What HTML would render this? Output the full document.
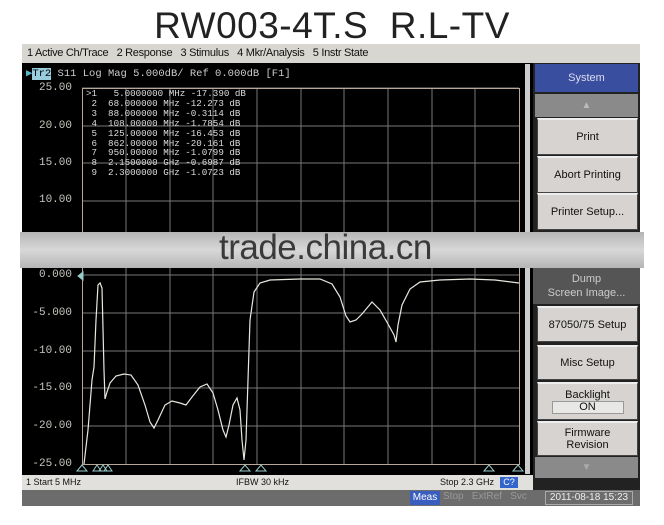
<!DOCTYPE html>
<html><head><style>
*{margin:0;padding:0;box-sizing:border-box}
body{width:664px;height:525px;background:#fff;position:relative;overflow:hidden;font-family:"Liberation Sans",sans-serif}
.a{position:absolute}
#title{left:0;width:664px;top:5px;text-align:center;font-size:37px;color:#222;letter-spacing:0.5px;white-space:pre}
#menu{left:22px;top:44px;width:618px;height:19px;background:#d8d6d0;font-size:11px;line-height:19px;padding-left:5px;color:#111;white-space:pre;letter-spacing:-0.3px}
#scr{left:22px;top:63px;width:511px;height:412px;background:#000}
.yl{position:absolute;left:22px;width:50px;text-align:right;font-family:"Liberation Mono",monospace;font-size:11px;color:#c8c8c0}
.mk{font-family:"Liberation Mono",monospace;font-size:9.2px;color:#ddd;white-space:pre;line-height:9.9px}
.btn{position:absolute;left:537px;width:101px;background:#d6d3d0;border:1px solid #444;border-top:2px solid #eee;font-size:11px;text-align:center;color:#111;display:flex;flex-direction:column;justify-content:center;align-items:center}
</style></head><body>
<div id="title" class="a">RW003-4T.S  R.L-TV</div>
<div id="menu" class="a">1 Active Ch/Trace   2 Response   3 Stimulus   4 Mkr/Analysis   5 Instr State</div>
<div id="scr" class="a"></div>
<div class="a" style="left:26px;top:67px;font-family:'Liberation Mono',monospace;font-size:10.5px;color:#ccc;white-space:pre"><span style="color:#5bc;">▶</span><span style="background:#9cd;color:#000">Tr2</span> S11 Log Mag 5.000dB/ Ref 0.000dB [F1]</div>
<div class="yl" style="top:82px">25.00</div>
<div class="yl" style="top:120px">20.00</div>
<div class="yl" style="top:157px">15.00</div>
<div class="yl" style="top:194px">10.00</div>
<div class="yl" style="top:269px">0.000</div>
<div class="yl" style="top:307px">-5.000</div>
<div class="yl" style="top:345px">-10.00</div>
<div class="yl" style="top:382px">-15.00</div>
<div class="yl" style="top:420px">-20.00</div>
<div class="yl" style="top:458px">-25.00</div>
<svg class="a" style="left:0;top:0" width="664" height="525">
<g stroke="#777" stroke-width="1">
<line x1="82" y1="88" x2="519" y2="88"/><line x1="82" y1="126" x2="519" y2="126"/><line x1="82" y1="163" x2="519" y2="163"/><line x1="82" y1="201" x2="519" y2="201"/><line x1="82" y1="238" x2="519" y2="238"/><line x1="82" y1="275" x2="519" y2="275"/><line x1="82" y1="313" x2="519" y2="313"/><line x1="82" y1="351" x2="519" y2="351"/><line x1="82" y1="388" x2="519" y2="388"/><line x1="82" y1="426" x2="519" y2="426"/>
<line x1="126" y1="88" x2="126" y2="464"/><line x1="170" y1="88" x2="170" y2="464"/><line x1="213" y1="88" x2="213" y2="464"/><line x1="257" y1="88" x2="257" y2="464"/><line x1="301" y1="88" x2="301" y2="464"/><line x1="344" y1="88" x2="344" y2="464"/><line x1="388" y1="88" x2="388" y2="464"/><line x1="432" y1="88" x2="432" y2="464"/><line x1="475" y1="88" x2="475" y2="464"/>
</g>
<rect x="82.5" y="88.5" width="437" height="376" fill="none" stroke="#b8a89a"/>
<rect x="525" y="64" width="5" height="410" fill="#ccc"/>
<path d="M84,464 L88,430 L92,380 L94,367 L96,320 L98,285 L100,283 L102,288 L104,370 L105,399 L107,392 L110,383 L116,376 L124,374 L131,375 L138,385 L145,405 L150,422 L154,428 L158,420 L165,405 L172,401 L180,403 L186,405 L192,397 L200,387 L207,384 L213,393 L218,410 L223,430 L226,437 L229,425 L233,405 L237,398 L240,410 L242,440 L244,460 L246,440 L248,380 L250,320 L254,292 L260,283 L270,280 L300,279 L320,279 L332,284 L340,297 L346,316 L350,322 L356,320 L362,314 L372,302 L380,310 L388,324 L394,335 L396,342 L398,325 L402,305 L410,289 L420,282 L440,280 L470,279 L495,280 L519,283" fill="none" stroke="#e8e8e0" stroke-width="1.2"/>
<g fill="none" stroke="#9cc" stroke-width="1">
<path d="M82,465 l-5,6 h10z"/><path d="M93,471 l4,-6 l4,6z"/><path d="M99,471 l4,-6 l4,6z"/><path d="M104,471 l4,-6 l4,6z"/><path d="M240,471 l5,-6 l5,6z"/><path d="M256,471 l5,-6 l5,6z"/><path d="M484,471 l5,-6 l5,6z"/><path d="M513,471 l5,-6 l5,6z"/>
<path d="M78,276 l5,-4 v8z" fill="#9cc"/>
</g>
</svg>
<div class="a mk" style="left:86px;top:89px">>1   5.0000000 MHz -17.390 dB
 2  68.000000 MHz -12.273 dB
 3  88.000000 MHz -0.3114 dB
 4  108.00000 MHz -1.7854 dB
 5  125.00000 MHz -16.453 dB
 6  862.00000 MHz -20.161 dB
 7  950.00000 MHz -1.0799 dB
 8  2.1500000 GHz -0.6987 dB
 9  2.3000000 GHz -1.0723 dB</div>
<div class="a" style="left:22px;top:475px;width:511px;height:15px;background:#e2e0dc;font-size:9px;line-height:15px;color:#111">
<span class="a" style="left:4px">1  Start 5 MHz</span><span class="a" style="left:214px">IFBW 30 kHz</span><span class="a" style="left:418px">Stop 2.3 GHz</span><span class="a" style="left:478px;top:2px;width:18px;height:11px;background:#3366cc;color:#fff;line-height:11px;text-align:center">C?</span></div>
<div class="a" style="left:22px;top:490px;width:618px;height:16px;background:#6c6c6c"></div>
<div class="a" style="left:410px;top:491px;width:30px;height:14px;background:#3a5ec0;color:#fff;font-size:10px;line-height:14px;text-align:center">Meas</div>
<div class="a" style="left:443px;top:491px;font-size:10px;color:#999;white-space:pre">Stop   ExtRef   Svc</div>
<div class="a" style="left:545px;top:491px;width:88px;height:14px;border:1px solid #aaa;color:#eee;font-size:10px;line-height:12px;text-align:center">2011-08-18 15:23</div>
<div class="a" style="left:533px;top:63px;width:107px;height:427px;background:#222"></div>
<div class="a" style="left:535px;top:64px;width:103px;height:28px;background:#3a4ea0;color:#dde;font-size:11px;line-height:28px;text-align:center">System</div>
<div class="a" style="left:535px;top:94px;width:103px;height:23px;background:#8a8a8a;color:#bbb;font-size:10px;line-height:23px;text-align:center">▲</div>
<div class="btn" style="top:118px;height:37px">Print</div>
<div class="btn" style="top:156px;height:37px">Abort Printing</div>
<div class="btn" style="top:193px;height:37px">Printer Setup...</div>
<div class="a" style="left:533px;top:268px;width:107px;height:36px;background:#555;color:#ccc;font-size:11px;text-align:center;line-height:14px;padding-top:4px">Dump<br>Screen Image...</div>
<div class="btn" style="top:306px;height:36px">87050/75 Setup</div>
<div class="btn" style="top:345px;height:35px">Misc Setup</div>
<div class="btn" style="top:382px;height:38px">Backlight<div style="width:72px;height:13px;background:#e8e8e6;border:1px solid #999;line-height:11px">ON</div></div>
<div class="btn" style="top:421px;height:35px">Firmware<br>Revision</div>
<div class="a" style="left:535px;top:457px;width:103px;height:21px;background:#8a8a8a;color:#aaa;font-size:10px;line-height:21px;text-align:center">▼</div>
<div class="a" style="left:20px;top:232px;width:624px;height:36px;background:linear-gradient(#b5b5b5,#d8d8d8 50%,#b5b5b5)"></div>
<div class="a" style="left:219px;top:228px;font-size:35px;color:#3a3a3a;letter-spacing:-0.5px">trade.china.cn</div>
</body></html>
